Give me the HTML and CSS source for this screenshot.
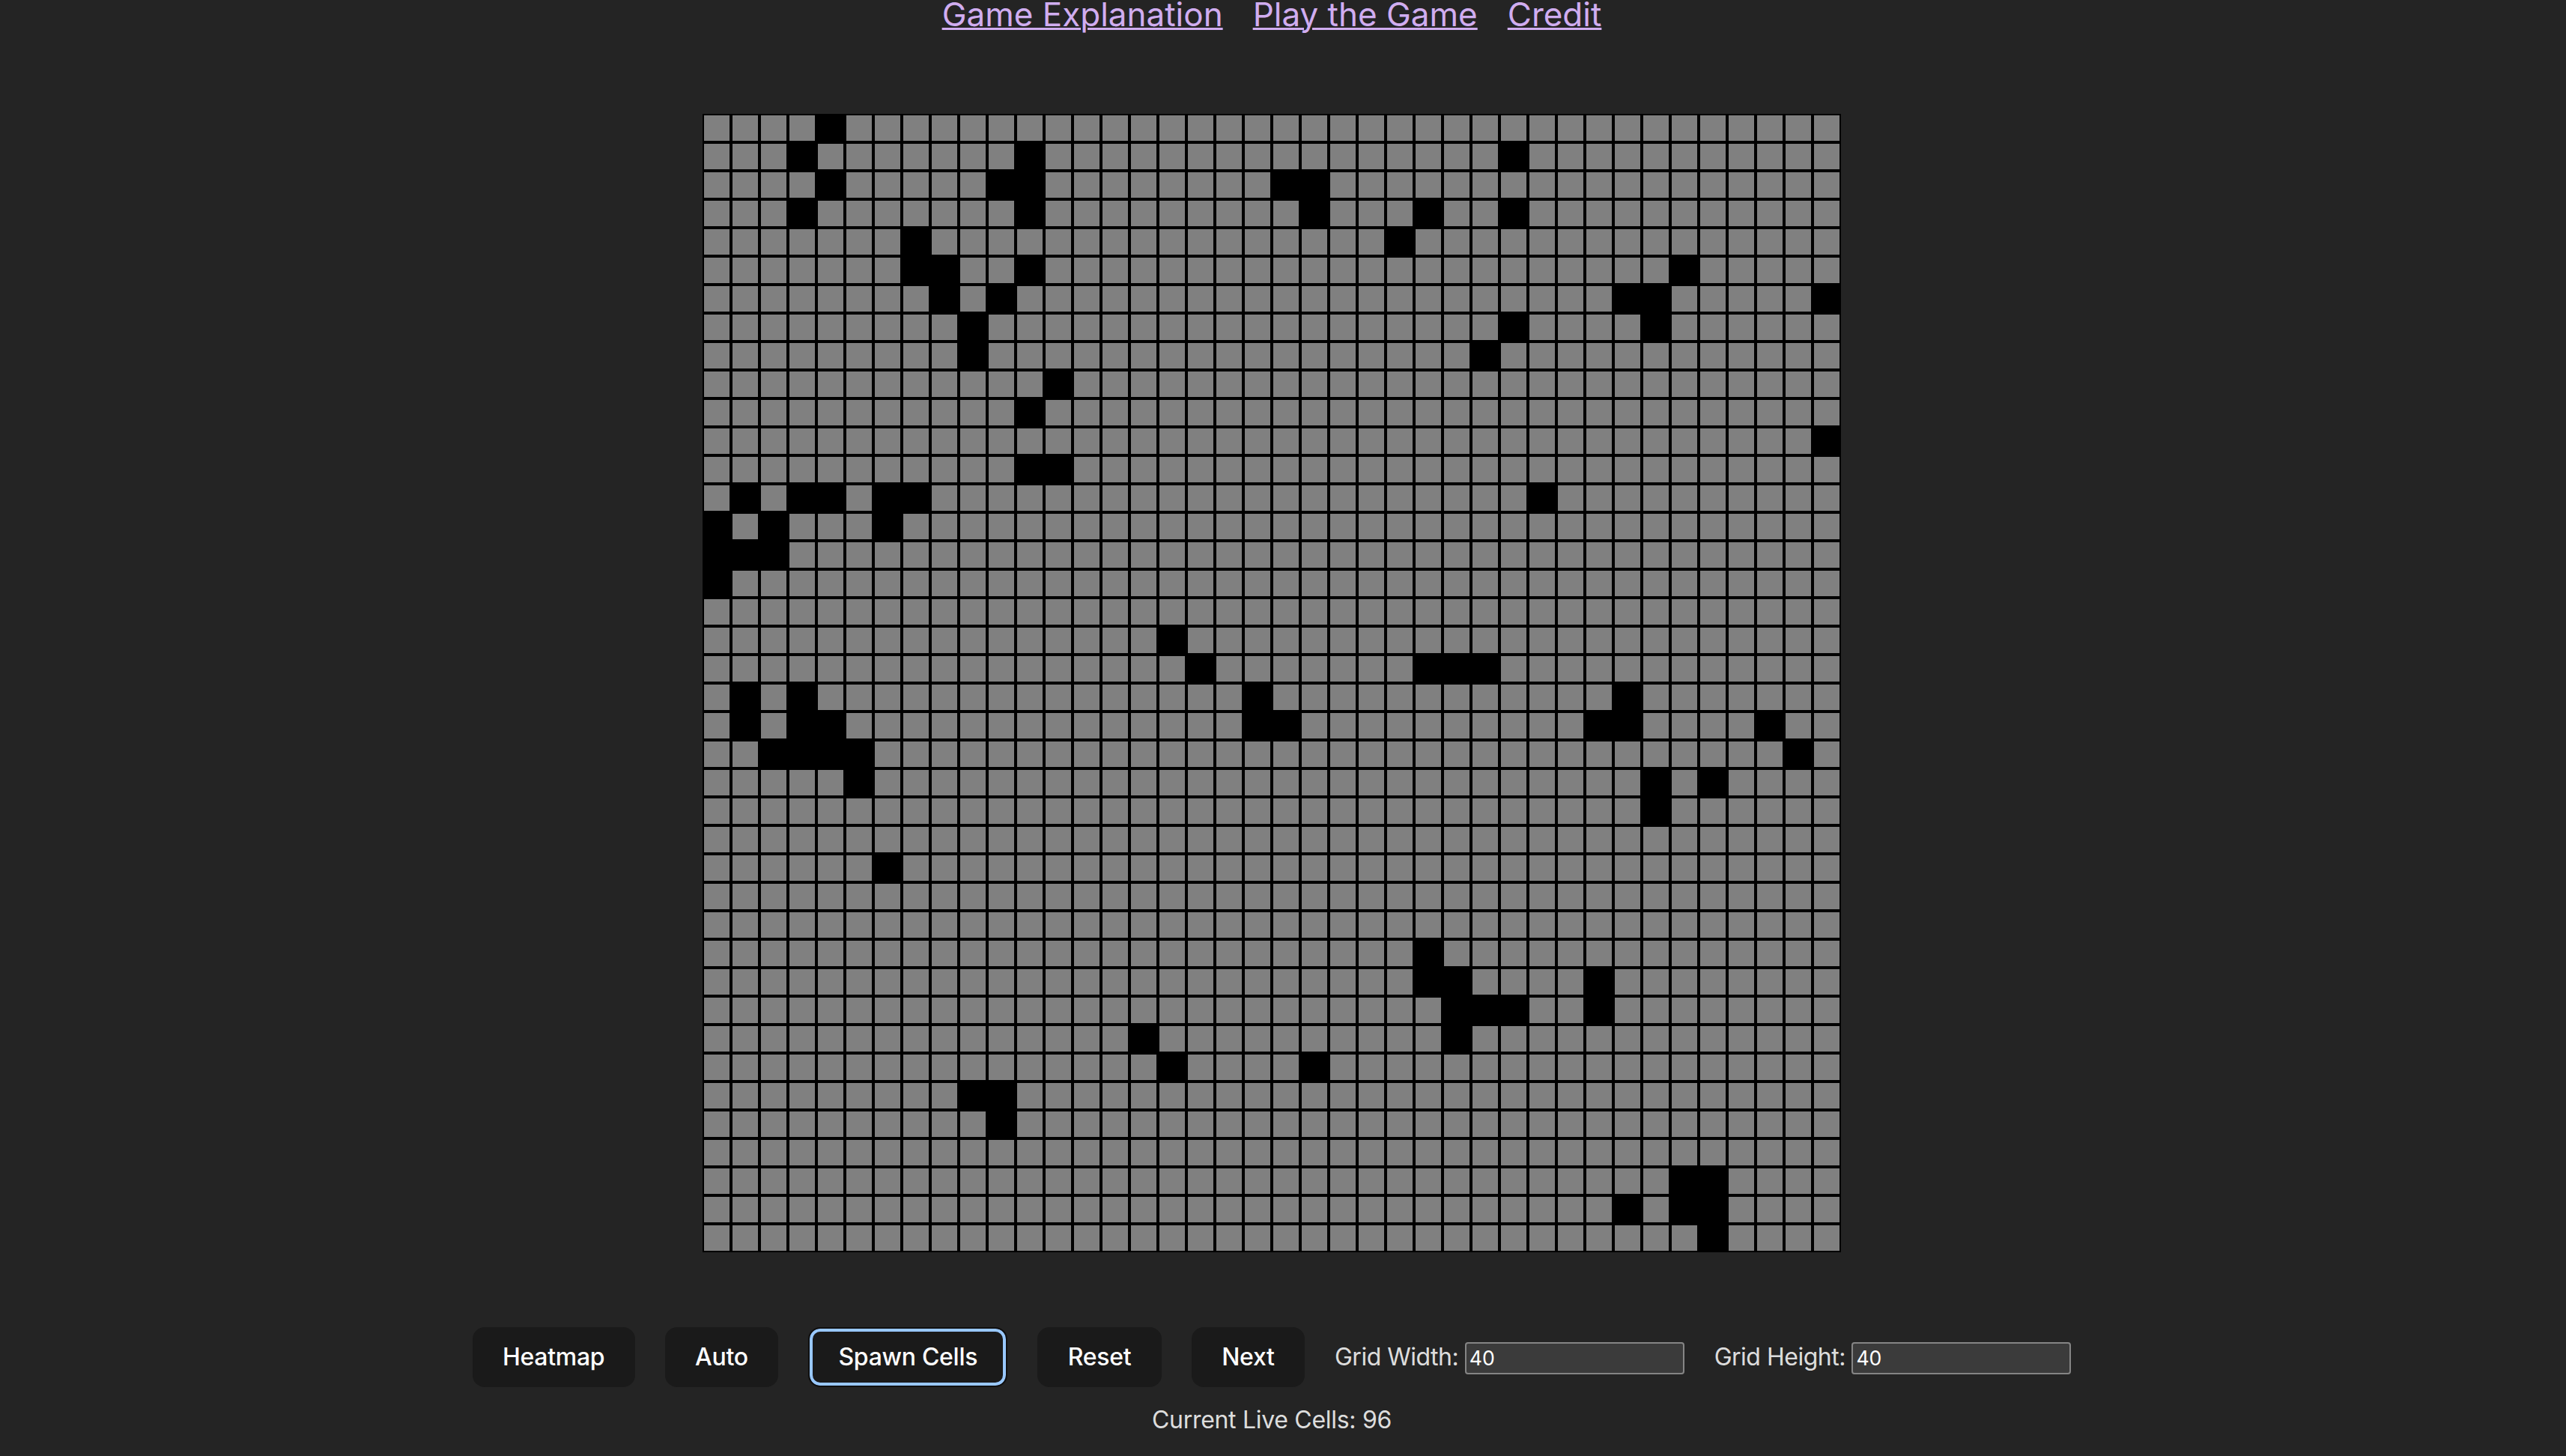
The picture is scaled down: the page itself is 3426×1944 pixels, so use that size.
FILE: index.html
```html
<!DOCTYPE html>
<html lang="en">
<head>
<meta charset="utf-8">
<title>Game of Life</title>
<link rel="stylesheet" href="styles.css">
</head>
<body>
<div class="app">
  <nav class="nav">
    <a class="nav-link" href="#explanation">Game Explanation</a>
    <a class="nav-link" href="#play">Play the Game</a>
    <a class="nav-link" href="#credit">Credit</a>
  </nav>
  <div class="board" id="board"></div>
  <div class="controls">
    <button class="btn" type="button">Heatmap</button>
    <button class="btn" type="button">Auto</button>
    <button class="btn btn-focus" type="button">Spawn Cells</button>
    <button class="btn" type="button">Reset</button>
    <button class="btn" type="button">Next</button>
    <label class="field">Grid Width: <input class="num" type="text" value="40"></label>
    <label class="field">Grid Height: <input class="num" type="text" value="40"></label>
  </div>
  <p class="count">Current Live Cells: 96</p>
</div>
<script src="script.js"></script>
</body>
</html>
```

FILE: styles.css
```css
html, body {
  margin: 0;
  padding: 0;
  background: #242424;
}

body {
  font-family: Inter, "Noto Sans", "Liberation Sans", sans-serif;
  color: rgba(255, 255, 255, 0.87);
  font-size: 32px;
  line-height: 1.5;
  letter-spacing: -0.3px;
}

.app {
  width: 3396px;
  display: flex;
  flex-direction: column;
  align-items: center;
}

.nav {
  display: flex;
  gap: 40px;
  font-size: 44px;
  line-height: 37px;
  padding-top: 1px;
  letter-spacing: 0;
}

.nav-link {
  color: #d0adf0;
  text-decoration: underline;
  text-decoration-thickness: 3px;
  font-weight: 400;
}

.board {
  margin-top: 114px;
  display: grid;
  grid-template-columns: repeat(40, 38px);
  grid-auto-rows: 38px;
}

.cell {
  box-sizing: border-box;
  border: 2px solid #000;
  background: #808080;
}

.cell.alive {
  background: #000;
}

.controls {
  margin-top: 100px;
  display: flex;
  align-items: baseline;
  gap: 40px;
}

.btn {
  font-family: inherit;
  font-size: 32px;
  font-weight: 500;
  line-height: 38px;
  letter-spacing: -0.3px;
  padding: 19px 38.4px;
  border: 2px solid transparent;
  border-radius: 16px;
  background: #1a1a1a;
  color: #ffffff;
  cursor: pointer;
}

.btn-focus {
  border-color: #101010;
  box-shadow: inset 0 0 0 4px #99c8ff;
}

.field {
  white-space: nowrap;
  font-size: 32px;
  letter-spacing: -0.5px;
}

.num {
  box-sizing: border-box;
  width: 293px;
  height: 43px;
  padding: 0 4px;
  border: 2px solid #858585;
  border-radius: 4px;
  background: #3b3b3b;
  color: #ffffff;
  font-family: Inter, "Liberation Sans", sans-serif;
  font-size: 26.67px;
  letter-spacing: 0;
}

.count {
  margin: 20px 0 0;
  line-height: 48px;
}
```

FILE: script.js
```js
const live = {
  0: [4],
  1: [3, 11, 28],
  2: [4, 10, 11, 20, 21],
  3: [3, 11, 21, 25, 28],
  4: [7, 24],
  5: [7, 8, 11, 34],
  6: [8, 10, 32, 33, 39],
  7: [9, 28, 33],
  8: [9, 27],
  9: [12],
  10: [11],
  11: [39],
  12: [11, 12],
  13: [1, 3, 4, 6, 7, 29],
  14: [0, 2, 6],
  15: [0, 1, 2],
  16: [0],
  18: [16],
  19: [17, 25, 26, 27],
  20: [1, 3, 19, 32],
  21: [1, 3, 4, 19, 20, 31, 32, 37],
  22: [2, 3, 4, 5, 38],
  23: [5, 33, 35],
  24: [33],
  26: [6],
  29: [25],
  30: [25, 26, 31],
  31: [26, 27, 28, 31],
  32: [15, 26],
  33: [16, 21],
  34: [9, 10],
  35: [10],
  37: [34, 35],
  38: [32, 34, 35],
  39: [35]
};

const board = document.getElementById('board');
for (let r = 0; r < 40; r++) {
  const row = live[r] || [];
  for (let c = 0; c < 40; c++) {
    const cell = document.createElement('div');
    cell.className = row.includes(c) ? 'cell alive' : 'cell';
    board.appendChild(cell);
  }
}
```
